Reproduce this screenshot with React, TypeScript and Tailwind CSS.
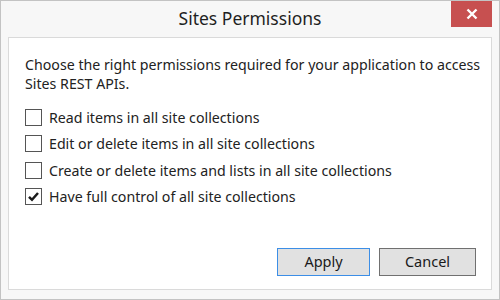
import React from "react";

const font = { fontFamily: '"Noto Sans", "Open Sans", sans-serif' };

function Check({ checked }: { checked?: boolean }) {
  return (
    <div className="w-[17px] h-[17px] border border-[#555555] bg-white flex items-center justify-center shrink-0">
      {checked && (
        <svg width="13" height="13" viewBox="0 0 13 13">
          <path d="M2 6.8 L5 9.8 L11 3" fill="none" stroke="#1a1a1a" strokeWidth="2.5" />
        </svg>
      )}
    </div>
  );
}

const items = [
  { label: "Read items in all site collections", checked: false },
  { label: "Edit or delete items in all site collections", checked: false },
  { label: "Create or delete items and lists in all site collections", checked: false },
  { label: "Have full control of all site collections", checked: true },
];

export default function App() {
  return (
    <div
      className="w-[500px] h-[300px] bg-[#f7f7f7] border border-[#c3c3c3] flex flex-col text-[#222222] overflow-hidden"
      style={font}
    >
      <div className="relative h-[36px] shrink-0 flex items-center justify-center">
        <span className="text-[17.5px] text-[#1f1f1f] leading-none">Sites Permissions</span>
        <div className="absolute right-[7px] top-0 w-[41px] h-[26px] bg-[#c75050] flex items-center justify-center">
          <svg width="12" height="12" viewBox="0 0 12 12">
            <path d="M1.5 1.5 L10.5 10.5 M10.5 1.5 L1.5 10.5" stroke="#fff" strokeWidth="2.4" />
          </svg>
        </div>
      </div>
      <div className="mx-[7px] h-[253px] bg-white border border-[#dadada] flex flex-col pl-[16px] pr-[10px] pt-[17px]">
        <p className="text-[14.2px] leading-[19px]">
          Choose the right permissions required for your application to access Sites REST APIs.
        </p>
        <div className="flex flex-col gap-[9px] mt-[16px]">
          {items.map((it) => (
            <div key={it.label} className="flex items-center gap-[7px] h-[17.3px]">
              <Check checked={it.checked} />
              <span className="text-[14.2px] leading-[17px]">{it.label}</span>
            </div>
          ))}
        </div>
        <div className="flex justify-end gap-[9px] mt-auto mb-[13px] mr-[5px]">
          <button className="w-[93px] h-[28px] bg-[#e1e1e1] border border-[#3c8ee6] text-[14.5px] text-[#1a1a1a]">
            Apply
          </button>
          <button className="w-[97px] h-[28px] bg-[#e1e1e1] border border-[#707070] text-[14.5px] text-[#1a1a1a]">
            Cancel
          </button>
        </div>
      </div>
    </div>
  );
}
